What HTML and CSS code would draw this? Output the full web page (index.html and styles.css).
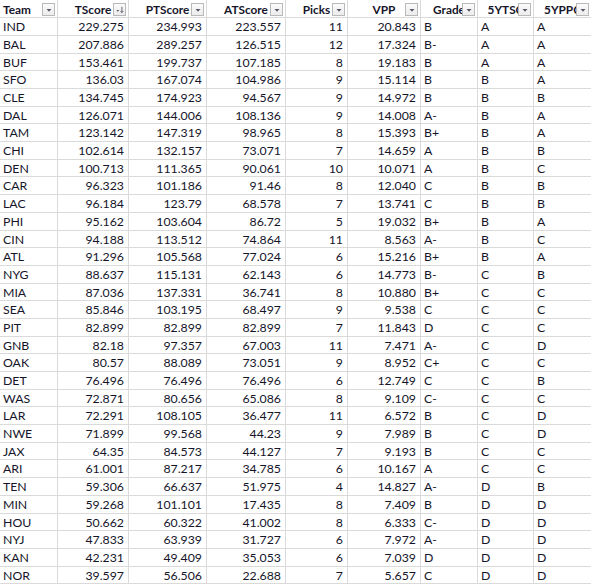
FILE: index.html
```html
<!DOCTYPE html>
<html>
<head>
<meta charset="utf-8">
<link rel="stylesheet" href="styles.css">
</head>
<body>
<div class="sheet">
  <div class="row head">
    <div class="c hl">Team<span class="btn"><svg viewBox="0 0 10 10"><path d="M2.5 4h5L5 6.8z"/></svg></span></div>
    <div class="c hc">TScore<span class="btn"><svg viewBox="0 0 11 10"><path d="M1.5 5h3.2L3.1 6.8z"/><path d="M7.6 1.5v6.2M6 6l1.6 1.9L9.2 6" class="ar"/></svg></span></div>
    <div class="c hc">PTScore<span class="btn"><svg viewBox="0 0 10 10"><path d="M2.5 4h5L5 6.8z"/></svg></span></div>
    <div class="c hc">ATScore<span class="btn"><svg viewBox="0 0 10 10"><path d="M2.5 4h5L5 6.8z"/></svg></span></div>
    <div class="c hc">Picks<span class="btn"><svg viewBox="0 0 10 10"><path d="M2.5 4h5L5 6.8z"/></svg></span></div>
    <div class="c hc">VPP<span class="btn"><svg viewBox="0 0 10 10"><path d="M2.5 4h5L5 6.8z"/></svg></span></div>
    <div class="c hc">Grade<span class="btn"><svg viewBox="0 0 10 10"><path d="M2.5 4h5L5 6.8z"/></svg></span></div>
    <div class="c hc">5YTSC<span class="btn"><svg viewBox="0 0 10 10"><path d="M2.5 4h5L5 6.8z"/></svg></span></div>
    <div class="c hc">5YPPC<span class="btn"><svg viewBox="0 0 10 10"><path d="M2.5 4h5L5 6.8z"/></svg></span></div>
  </div>
  <div class="row"><div class="c">IND</div><div class="c n">229.275</div><div class="c n">234.993</div><div class="c n">223.557</div><div class="c n">11</div><div class="c n">20.843</div><div class="c">B</div><div class="c">A</div><div class="c">A</div></div>
  <div class="row"><div class="c">BAL</div><div class="c n">207.886</div><div class="c n">289.257</div><div class="c n">126.515</div><div class="c n">12</div><div class="c n">17.324</div><div class="c">B-</div><div class="c">A</div><div class="c">A</div></div>
  <div class="row"><div class="c">BUF</div><div class="c n">153.461</div><div class="c n">199.737</div><div class="c n">107.185</div><div class="c n">8</div><div class="c n">19.183</div><div class="c">B</div><div class="c">A</div><div class="c">A</div></div>
  <div class="row"><div class="c">SFO</div><div class="c n">136.03</div><div class="c n">167.074</div><div class="c n">104.986</div><div class="c n">9</div><div class="c n">15.114</div><div class="c">B</div><div class="c">B</div><div class="c">A</div></div>
  <div class="row"><div class="c">CLE</div><div class="c n">134.745</div><div class="c n">174.923</div><div class="c n">94.567</div><div class="c n">9</div><div class="c n">14.972</div><div class="c">B</div><div class="c">B</div><div class="c">B</div></div>
  <div class="row"><div class="c">DAL</div><div class="c n">126.071</div><div class="c n">144.006</div><div class="c n">108.136</div><div class="c n">9</div><div class="c n">14.008</div><div class="c">A-</div><div class="c">B</div><div class="c">A</div></div>
  <div class="row"><div class="c">TAM</div><div class="c n">123.142</div><div class="c n">147.319</div><div class="c n">98.965</div><div class="c n">8</div><div class="c n">15.393</div><div class="c">B+</div><div class="c">B</div><div class="c">A</div></div>
  <div class="row"><div class="c">CHI</div><div class="c n">102.614</div><div class="c n">132.157</div><div class="c n">73.071</div><div class="c n">7</div><div class="c n">14.659</div><div class="c">A</div><div class="c">B</div><div class="c">B</div></div>
  <div class="row"><div class="c">DEN</div><div class="c n">100.713</div><div class="c n">111.365</div><div class="c n">90.061</div><div class="c n">10</div><div class="c n">10.071</div><div class="c">A</div><div class="c">B</div><div class="c">C</div></div>
  <div class="row"><div class="c">CAR</div><div class="c n">96.323</div><div class="c n">101.186</div><div class="c n">91.46</div><div class="c n">8</div><div class="c n">12.040</div><div class="c">C</div><div class="c">B</div><div class="c">B</div></div>
  <div class="row"><div class="c">LAC</div><div class="c n">96.184</div><div class="c n">123.79</div><div class="c n">68.578</div><div class="c n">7</div><div class="c n">13.741</div><div class="c">C</div><div class="c">B</div><div class="c">B</div></div>
  <div class="row"><div class="c">PHI</div><div class="c n">95.162</div><div class="c n">103.604</div><div class="c n">86.72</div><div class="c n">5</div><div class="c n">19.032</div><div class="c">B+</div><div class="c">B</div><div class="c">A</div></div>
  <div class="row"><div class="c">CIN</div><div class="c n">94.188</div><div class="c n">113.512</div><div class="c n">74.864</div><div class="c n">11</div><div class="c n">8.563</div><div class="c">A-</div><div class="c">B</div><div class="c">C</div></div>
  <div class="row"><div class="c">ATL</div><div class="c n">91.296</div><div class="c n">105.568</div><div class="c n">77.024</div><div class="c n">6</div><div class="c n">15.216</div><div class="c">B+</div><div class="c">B</div><div class="c">A</div></div>
  <div class="row"><div class="c">NYG</div><div class="c n">88.637</div><div class="c n">115.131</div><div class="c n">62.143</div><div class="c n">6</div><div class="c n">14.773</div><div class="c">B-</div><div class="c">C</div><div class="c">B</div></div>
  <div class="row"><div class="c">MIA</div><div class="c n">87.036</div><div class="c n">137.331</div><div class="c n">36.741</div><div class="c n">8</div><div class="c n">10.880</div><div class="c">B+</div><div class="c">C</div><div class="c">C</div></div>
  <div class="row"><div class="c">SEA</div><div class="c n">85.846</div><div class="c n">103.195</div><div class="c n">68.497</div><div class="c n">9</div><div class="c n">9.538</div><div class="c">C</div><div class="c">C</div><div class="c">C</div></div>
  <div class="row"><div class="c">PIT</div><div class="c n">82.899</div><div class="c n">82.899</div><div class="c n">82.899</div><div class="c n">7</div><div class="c n">11.843</div><div class="c">D</div><div class="c">C</div><div class="c">C</div></div>
  <div class="row"><div class="c">GNB</div><div class="c n">82.18</div><div class="c n">97.357</div><div class="c n">67.003</div><div class="c n">11</div><div class="c n">7.471</div><div class="c">A-</div><div class="c">C</div><div class="c">D</div></div>
  <div class="row"><div class="c">OAK</div><div class="c n">80.57</div><div class="c n">88.089</div><div class="c n">73.051</div><div class="c n">9</div><div class="c n">8.952</div><div class="c">C+</div><div class="c">C</div><div class="c">C</div></div>
  <div class="row"><div class="c">DET</div><div class="c n">76.496</div><div class="c n">76.496</div><div class="c n">76.496</div><div class="c n">6</div><div class="c n">12.749</div><div class="c">C</div><div class="c">C</div><div class="c">B</div></div>
  <div class="row"><div class="c">WAS</div><div class="c n">72.871</div><div class="c n">80.656</div><div class="c n">65.086</div><div class="c n">8</div><div class="c n">9.109</div><div class="c">C-</div><div class="c">C</div><div class="c">C</div></div>
  <div class="row"><div class="c">LAR</div><div class="c n">72.291</div><div class="c n">108.105</div><div class="c n">36.477</div><div class="c n">11</div><div class="c n">6.572</div><div class="c">B</div><div class="c">C</div><div class="c">D</div></div>
  <div class="row"><div class="c">NWE</div><div class="c n">71.899</div><div class="c n">99.568</div><div class="c n">44.23</div><div class="c n">9</div><div class="c n">7.989</div><div class="c">B</div><div class="c">C</div><div class="c">D</div></div>
  <div class="row"><div class="c">JAX</div><div class="c n">64.35</div><div class="c n">84.573</div><div class="c n">44.127</div><div class="c n">7</div><div class="c n">9.193</div><div class="c">B</div><div class="c">C</div><div class="c">C</div></div>
  <div class="row"><div class="c">ARI</div><div class="c n">61.001</div><div class="c n">87.217</div><div class="c n">34.785</div><div class="c n">6</div><div class="c n">10.167</div><div class="c">A</div><div class="c">C</div><div class="c">C</div></div>
  <div class="row"><div class="c">TEN</div><div class="c n">59.306</div><div class="c n">66.637</div><div class="c n">51.975</div><div class="c n">4</div><div class="c n">14.827</div><div class="c">A-</div><div class="c">D</div><div class="c">B</div></div>
  <div class="row"><div class="c">MIN</div><div class="c n">59.268</div><div class="c n">101.101</div><div class="c n">17.435</div><div class="c n">8</div><div class="c n">7.409</div><div class="c">B</div><div class="c">D</div><div class="c">D</div></div>
  <div class="row"><div class="c">HOU</div><div class="c n">50.662</div><div class="c n">60.322</div><div class="c n">41.002</div><div class="c n">8</div><div class="c n">6.333</div><div class="c">C-</div><div class="c">D</div><div class="c">D</div></div>
  <div class="row"><div class="c">NYJ</div><div class="c n">47.833</div><div class="c n">63.939</div><div class="c n">31.727</div><div class="c n">6</div><div class="c n">7.972</div><div class="c">A-</div><div class="c">D</div><div class="c">D</div></div>
  <div class="row"><div class="c">KAN</div><div class="c n">42.231</div><div class="c n">49.409</div><div class="c n">35.053</div><div class="c n">6</div><div class="c n">7.039</div><div class="c">D</div><div class="c">D</div><div class="c">D</div></div>
  <div class="row"><div class="c">NOR</div><div class="c n">39.597</div><div class="c n">56.506</div><div class="c n">22.688</div><div class="c n">7</div><div class="c n">5.657</div><div class="c">C</div><div class="c">D</div><div class="c">D</div></div>
</div>
</body>
</html>
```

FILE: styles.css
```css
html, body {
  margin: 0;
  padding: 0;
  background: #ffffff;
  overflow: hidden;
}

.sheet {
  width: 600px;
  font-family: Lato, "Open Sans", sans-serif;
  font-size: 12.3px;
  color: #15152a;
}

.row {
  display: grid;
  grid-template-columns: 58px 71px 78px 79px 62px 73px 57px 56px 58px;
  height: 17.7px;
  box-sizing: border-box;
  border-bottom: 1px solid #dadada;
}

.row.head {
  height: 18.3px;
}

.c {
  box-sizing: border-box;
  border-right: 1px solid #dadada;
  padding: 0 3px;
  line-height: 17px;
  white-space: nowrap;
  overflow: hidden;
}

.n {
  text-align: right;
  padding-right: 4px;
}

.head .c {
  position: relative;
  font-weight: 700;
  font-size: 11.8px;
  line-height: 19px;
}

.head .hc {
  text-align: center;
}

.btn {
  position: absolute;
  right: 2px;
  top: 3px;
  width: 13px;
  height: 13px;
  box-sizing: border-box;
  border: 1px solid #b9b9b9;
  background: linear-gradient(#fbfbfb, #ececec);
  display: flex;
  align-items: center;
  justify-content: center;
}

.btn svg {
  width: 10px;
  height: 10px;
  fill: #555a66;
}

.btn .ar {
  fill: none;
  stroke: #555a66;
  stroke-width: 1;
}
```
